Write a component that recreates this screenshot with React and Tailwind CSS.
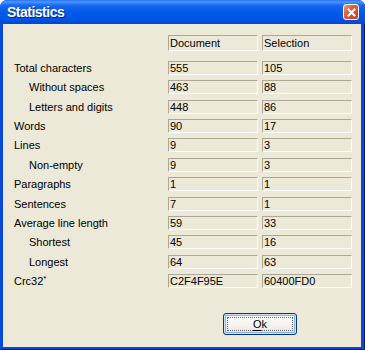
import React from 'react';

const rows = [
  { label: 'Total characters', sub: false, doc: '555', sel: '105', h: 'h-[19px]' },
  { label: 'Without spaces', sub: true, doc: '463', sel: '88', h: 'h-[20px]' },
  { label: 'Letters and digits', sub: true, doc: '448', sel: '86', h: 'h-[19px]' },
  { label: 'Words', sub: false, doc: '90', sel: '17', h: 'h-[19px]' },
  { label: 'Lines', sub: false, doc: '9', sel: '3', h: 'h-[20px]' },
  { label: 'Non-empty', sub: true, doc: '9', sel: '3', h: 'h-[19px]' },
  { label: 'Paragraphs', sub: false, doc: '1', sel: '1', h: 'h-[20px]' },
  { label: 'Sentences', sub: false, doc: '7', sel: '1', h: 'h-[19px]' },
  { label: 'Average line length', sub: false, doc: '59', sel: '33', h: 'h-[19px]' },
  { label: 'Shortest', sub: true, doc: '45', sel: '16', h: 'h-[20px]' },
  { label: 'Longest', sub: true, doc: '64', sel: '63', h: 'h-[19px]' },
  { label: 'Crc32', star: true, sub: false, doc: 'C2F4F95E', sel: '60400FD0', h: 'h-[14px]' },
];

const Box = ({ children, tall }) => (
  <div
    className={`w-[90px] border border-t-[#ACA899] border-l-[#ACA899] border-b-white border-r-white pl-[1px] whitespace-nowrap ${
      tall ? 'h-[16px] leading-[14px]' : 'h-[14px] leading-[12px]'
    }`}
  >
    {children}
  </div>
);

const CloseButton = () => (
  <div className="mt-[4px] w-[16px] h-[16px] rounded-[3px] border border-white bg-[linear-gradient(135deg,#F0A080_0%,#E2603A_35%,#CC3A16_100%)] flex items-center justify-center">
    <svg width="9" height="9" viewBox="0 0 9 9">
      <path d="M1.5 1.5 L7.5 7.5 M7.5 1.5 L1.5 7.5" stroke="#fff" strokeWidth="2" strokeLinecap="square" />
    </svg>
  </div>
);

export default function App() {
  return (
    <div className="w-[365px] h-[350px] flex flex-col rounded-t-[7px] overflow-hidden bg-[#0A48DA] shadow-[inset_-1px_-1px_0_#00138C] font-['Liberation_Sans',Arial,sans-serif] text-[11px] text-black">
      {/* title bar */}
      <div className="h-[24px] shrink-0 flex items-start justify-between pl-[7px] pr-[6px] bg-[linear-gradient(to_bottom,#2A74F0_0%,#4A96FF_8%,#1868F2_22%,#0058E8_55%,#0054E4_80%,#0046D2_100%)]">
        <span className="mt-[5px] text-[14px] leading-[15px] font-bold tracking-[-0.5px] text-white [text-shadow:1px_1px_0_#0A1E8C]">
          Statistics
        </span>
        <CloseButton />
      </div>

      <div className="flex-1 flex pl-[3px] pr-[4px] pb-[3px]">
        <div className="flex-1 flex flex-col bg-[#ECE9D8] pl-[11px] pt-[11px]">
          <div className="flex h-[16px] mb-[10px]">
            <div className="w-[154px]" />
            <Box tall>Document</Box>
            <div className="w-[4px]" />
            <Box tall>Selection</Box>
          </div>

          {rows.map((r) => (
            <div key={r.label} className={`flex items-start shrink-0 ${r.h}`}>
              <div className={`w-[154px] leading-[14px] whitespace-nowrap ${r.sub ? 'pl-[15px]' : ''}`}>
                {r.label}
                {r.star && <span className="text-[8px] align-top leading-[10px]">*</span>}
              </div>
              <Box>{r.doc}</Box>
              <div className="w-[4px]" />
              <Box>{r.sel}</Box>
            </div>
          ))}

          <div className="flex mt-[25px] pl-[209px]">
            <button className="w-[74px] h-[22px] rounded-[3px] border border-[#003C74] bg-[linear-gradient(to_bottom,#FFFFFF_0%,#F4F3EE_60%,#E6E3D8_90%,#D6D0C5_100%)] shadow-[inset_0_0_0_1px_#CEE3FC,inset_0_0_0_2px_#8DAEEA] p-[3px]">
              <div className="h-full border border-dotted border-[#6B6B6B] flex items-center justify-center leading-[12px]">
                <span>
                  <span className="underline underline-offset-[2px]">O</span>k
                </span>
              </div>
            </button>
          </div>
        </div>
      </div>
    </div>
  );
}
